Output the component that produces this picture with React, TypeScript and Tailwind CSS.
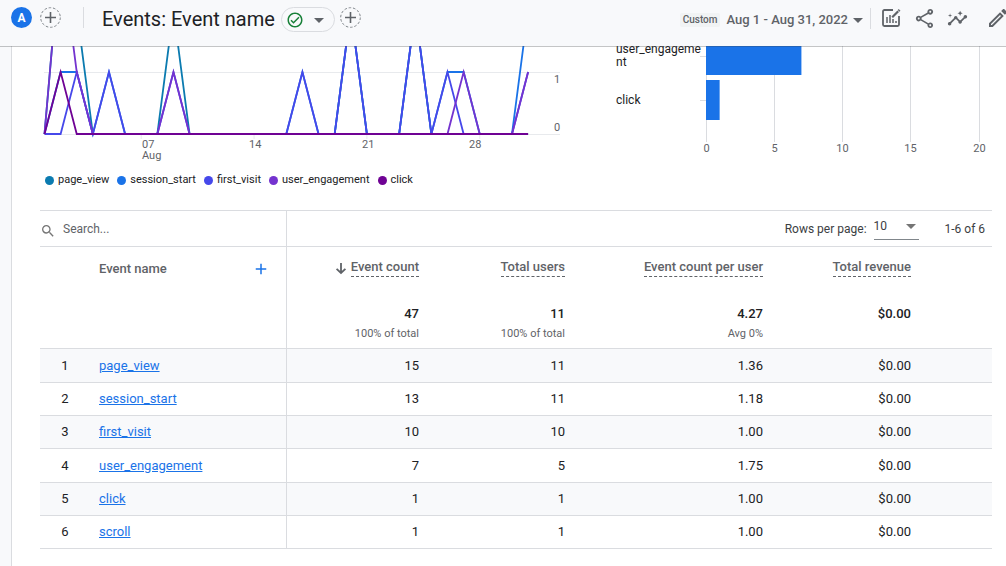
import type { ReactNode } from "react";
import {
  MdAdd,
  MdArrowDropDown,
  MdInsights,
  MdOutlineCheckCircle,
  MdOutlineEdit,
  MdOutlineShare,
  MdSearch,
} from "react-icons/md";

const DAYS = 31;

const SERIES: { name: string; color: string; points: Record<number, number> }[] = [
  { name: "page_view", color: "#0b7bb0", points: { 2: 3, 3: 2, 9: 2, 20: 2, 24: 2 } },
  { name: "session_start", color: "#1a73e8", points: { 2: 1, 3: 1, 5: 1, 17: 1, 20: 2, 24: 2, 26: 1, 27: 1, 31: 2 } },
  { name: "first_visit", color: "#4648ea", points: { 3: 1, 5: 1, 9: 1, 17: 1, 20: 2, 24: 2, 26: 1, 31: 1 } },
  { name: "user_engagement", color: "#7433cf", points: { 2: 3, 3: 1, 9: 1, 27: 1, 31: 1 } },
  { name: "click", color: "#6f0294", points: { 2: 1 } },
];

const ROWS = [
  { name: "page_view", count: "15", users: "11", perUser: "1.36", revenue: "$0.00" },
  { name: "session_start", count: "13", users: "11", perUser: "1.18", revenue: "$0.00" },
  { name: "first_visit", count: "10", users: "10", perUser: "1.00", revenue: "$0.00" },
  { name: "user_engagement", count: "7", users: "5", perUser: "1.75", revenue: "$0.00" },
  { name: "click", count: "1", users: "1", perUser: "1.00", revenue: "$0.00" },
  { name: "scroll", count: "1", users: "1", perUser: "1.00", revenue: "$0.00" },
];

const METRICS = [
  { label: "Event count", total: "47", note: "100% of total", sorted: true },
  { label: "Total users", total: "11", note: "100% of total" },
  { label: "Event count per user", total: "4.27", note: "Avg 0%" },
  { label: "Total revenue", total: "$0.00", note: "" },
];

const dayX = (day: number) => 4.5 + (day - 1) * 16.12;
const valueY = (value: number) => 88 - value * 62;

function linePoints(points: Record<number, number>) {
  return Array.from({ length: DAYS }, (_, i) => `${dayX(i + 1)},${valueY(points[i + 1] ?? 0)}`).join(" ");
}

function DashedAddButton({ label }: { label: string }) {
  return (
    <button
      type="button"
      aria-label={label}
      className="flex size-[21px] shrink-0 items-center justify-center text-[#5f6368]"
    >
      <svg viewBox="0 0 21 21" className="size-[21px]" fill="none" stroke="currentColor">
        <circle cx="10.5" cy="10.5" r="9.8" stroke="#80868b" strokeDasharray="2.6 1.8" />
        <path d="M10.5 5v11M5 10.5h11" strokeWidth="1.6" />
      </svg>
    </button>
  );
}

function CustomizeIcon() {
  return (
    <svg viewBox="0 0 20 20" className="size-5" fill="none" stroke="currentColor" strokeWidth="1.8">
      <path d="M12 2H3.4A1.4 1.4 0 0 0 2 3.4v13.2A1.4 1.4 0 0 0 3.4 18h13.2a1.4 1.4 0 0 0 1.4-1.4V8" />
      <path d="M6 9v6M9 7v8M12 11v4M15 13v2" strokeWidth="1.5" />
      <path d="m11.2 9.2 6-6" strokeWidth="2.2" />
      <path d="m17.6 2.8 1-1" strokeWidth="2.4" />
    </svg>
  );
}

function SortIcon() {
  return (
    <svg viewBox="0 0 12 14" className="h-[14px] w-3" fill="none" stroke="currentColor" strokeWidth="1.8">
      <path d="M6 2v10M1.6 7.8 6 12l4.4-4.2" />
    </svg>
  );
}

function IconButton({ label, children }: { label: string; children: ReactNode }) {
  return (
    <button type="button" aria-label={label} className="flex size-6 shrink-0 items-center justify-center">
      {children}
    </button>
  );
}

function Header() {
  return (
    <header className="relative z-10 flex h-[46px] items-start justify-between overflow-x-clip bg-[#f8f9fb] pl-[11px] text-[#5f6368] shadow-[0_1px_0_rgba(60,64,67,0.3)]">
      <div className="flex pt-[7px]">
        <button
          type="button"
          className="size-[21px] rounded-full bg-[#1a73e8] text-xs leading-none font-bold text-white"
        >
          A
        </button>
        <div className="ml-2">
          <DashedAddButton label="Add comparison" />
        </div>
        <div className="ml-[22px] h-[21px] w-px bg-[#dadce0]" />
        <h1 className="ml-[18px] text-xl leading-[25px] whitespace-nowrap text-[#202124]">Events: Event name</h1>
        <button
          type="button"
          aria-label="Data quality"
          className="ml-[6px] flex h-[25px] w-[54px] items-center justify-between rounded-full border border-[#dadce0] pr-[3px] pl-1"
        >
          <MdOutlineCheckCircle className="size-[18px] text-[#188038]" />
          <MdArrowDropDown className="size-6" />
        </button>
        <div className="ml-[5px]">
          <DashedAddButton label="Add filter" />
        </div>
      </div>

      <div className="-mr-1 flex items-center pt-1">
        <button type="button" className="flex items-center pt-1 whitespace-nowrap">
          <span className="rounded-xs bg-[#f1f3f4] px-[3px] text-[10px] leading-[14px] font-medium">Custom</span>
          <span className="ml-[6px] text-[13px] leading-[18px] font-medium">Aug 1 - Aug 31, 2022</span>
          <MdArrowDropDown className="-ml-[2px] size-6" />
        </button>
        <div className="h-[21px] w-px bg-[#dadce0]" />
        <div className="ml-2 flex items-center gap-[9px]">
          <IconButton label="Customize report">
            <CustomizeIcon />
          </IconButton>
          <IconButton label="Share this report">
            <MdOutlineShare className="size-[23px]" />
          </IconButton>
          <IconButton label="Insights">
            <MdInsights className="size-[21px]" />
          </IconButton>
        </div>
        <div className="ml-[17px]">
          <IconButton label="Edit">
            <MdOutlineEdit className="size-6" />
          </IconButton>
        </div>
      </div>
    </header>
  );
}

function LineChart() {
  return (
    <div>
      <svg width="525" height="120" className="block fill-[#5f6368] text-[11px]" role="img" aria-label="Events over time">
        <g stroke="#e8eaed">
          <path d="M4 26.5H520M4 88.5H520" />
          {[7, 14, 21, 28].map((day) => (
            <path key={day} d={`M${dayX(day)} 88v5`} />
          ))}
        </g>
        {SERIES.map((s) => (
          <polyline key={s.name} points={linePoints(s.points)} fill="none" stroke={s.color} strokeWidth="1.8" />
        ))}
        <text x="514" y="37">1</text>
        <text x="514" y="85">0</text>
        <text x="102" y="102">07</text>
        <text x="102" y="113">Aug</text>
        <text x="209" y="102">14</text>
        <text x="322" y="102">21</text>
        <text x="429" y="102">28</text>
      </svg>
      <ul className="flex gap-2 pt-[7px] pl-[5px] text-[11px] leading-[14px] text-[#202124]">
        {SERIES.map((s) => (
          <li key={s.name} className="flex items-center gap-1">
            <span className="size-[9px] rounded-full" style={{ backgroundColor: s.color }} />
            {s.name}
          </li>
        ))}
      </ul>
    </div>
  );
}

function BarChart() {
  const unit = 13.63;
  return (
    <svg width="376" height="120" className="block text-[11px]" role="img" aria-label="Event count by event name">
      <g stroke="#dadce0">
        {[0, 5, 10, 15, 20].map((v) => (
          <path key={v} d={`M${Math.round(90 + v * unit) + 0.5} 0v96`} />
        ))}
        <path d="M84 10.5h6M84 54.5h6" />
      </g>
      <rect x="90" y="-10" width={7 * unit} height="39" fill="#1a73e8" />
      <rect x="90" y="34" width={unit} height="40" fill="#1a73e8" />
      <g className="fill-[#202124] text-xs">
        <text x="0" y="7">user_engageme</text>
        <text x="0" y="20">nt</text>
        <text x="0" y="58">click</text>
      </g>
      <g textAnchor="middle" className="fill-[#5f6368]">
        {[0, 5, 10, 15, 20].map((v) => (
          <text key={v} x={Math.round(90 + v * unit) + 0.5} y="106">
            {v}
          </text>
        ))}
      </g>
    </svg>
  );
}

function EventsTable() {
  return (
    <table className="w-full table-fixed border-collapse text-right text-[13px] leading-4 text-[#202124]">
      <colgroup>
        <col className="w-[58px]" />
        <col className="w-[188px]" />
        <col className="w-[146px]" />
        <col className="w-[146px]" />
        <col className="w-[198px]" />
        <col className="w-[148px]" />
        <col className="w-[68px]" />
      </colgroup>
      <thead>
        <tr className="h-9 border-y border-[#dadce0] text-xs text-[#3c4043]">
          <td colSpan={2} className="border-r border-[#dadce0] p-0">
            <label className="flex items-center">
              <MdSearch className="mt-1 size-4 shrink-0 text-[#757575]" />
              <input
                type="text"
                aria-label="Search events"
                placeholder="Search..."
                className="ml-[7px] w-full bg-transparent outline-none placeholder:text-[#5f6368]"
              />
            </label>
          </td>
          <td colSpan={5} className="p-0">
            <div className="flex items-center justify-end pr-[7px]">
              <label htmlFor="rows-per-page">Rows per page:</label>
              <div className="relative ml-[7px]">
                <select
                  id="rows-per-page"
                  defaultValue="10"
                  className="block h-[22px] w-[45px] appearance-none border-b border-[#80868b] bg-transparent pb-[6px] outline-none"
                >
                  <option>10</option>
                  <option>25</option>
                  <option>50</option>
                </select>
                <MdArrowDropDown className="pointer-events-none absolute -top-1 -right-1 size-6 text-[#757575]" />
              </div>
              <span className="ml-[26px]">1-6 of 6</span>
            </div>
          </td>
        </tr>
        <tr className="h-[44px] text-[#5f6368]">
          <th className="p-0" />
          <th scope="col" className="border-r border-[#dadce0] p-0 text-left font-medium">
            <div className="flex items-center justify-between pr-4 pl-px">
              Event name
              <button type="button" aria-label="Add dimension" className="text-[#1a73e8]">
                <MdAdd className="size-[18px]" />
              </button>
            </div>
          </th>
          {METRICS.map((m) => (
            <th key={m.label} scope="col" className="p-0 pr-[13px] pb-[2px] font-medium">
              <div className="flex items-center justify-end gap-1">
                {m.sorted && <SortIcon />}
                <button type="button" className="border-b border-dashed border-[#5f6368] pb-px whitespace-nowrap">
                  {m.label}
                </button>
              </div>
            </th>
          ))}
          <th className="p-0" />
        </tr>
        <tr className="h-[58px] border-b border-[#dadce0]">
          <td colSpan={2} className="border-r border-[#dadce0] p-0" />
          {METRICS.map((m) => (
            <td key={m.label} className="p-0 pt-[15px] pr-[13px] align-top">
              <div className="font-medium">{m.total}</div>
              <div className="pt-[5px] text-[11px] leading-[14px] text-[#5f6368]">{m.note}</div>
            </td>
          ))}
          <td className="p-0" />
        </tr>
      </thead>
      <tbody>
        {ROWS.map((row, i) => (
          <tr
            key={row.name}
            className="h-[33px] border-b border-[#dadce0] odd:bg-[#f8f9fb] [&:nth-child(3n+1)]:h-[34px]"
          >
            <td className="p-0 pr-2 text-center">{i + 1}</td>
            <td className="border-r border-[#dadce0] p-0 pl-px text-left">
              <a href="#" className="text-[#1a73e8] underline">
                {row.name}
              </a>
            </td>
            <td className="p-0 pr-[13px]">{row.count}</td>
            <td className="p-0 pr-[13px]">{row.users}</td>
            <td className="p-0 pr-[13px]">{row.perUser}</td>
            <td className="p-0 pr-[13px]">{row.revenue}</td>
            <td className="p-0" />
          </tr>
        ))}
      </tbody>
    </table>
  );
}

export default function App() {
  return (
    <div className="flex min-h-screen flex-col bg-[#f8f9fb] font-['Roboto',sans-serif]">
      <Header />
      <main className="ml-[11px] flex-1 border-l border-[#dadce0] bg-white pr-[14px] pl-7">
        <section className="flex items-start justify-between pb-[23px]">
          <LineChart />
          <BarChart />
        </section>
        <EventsTable />
      </main>
    </div>
  );
}
